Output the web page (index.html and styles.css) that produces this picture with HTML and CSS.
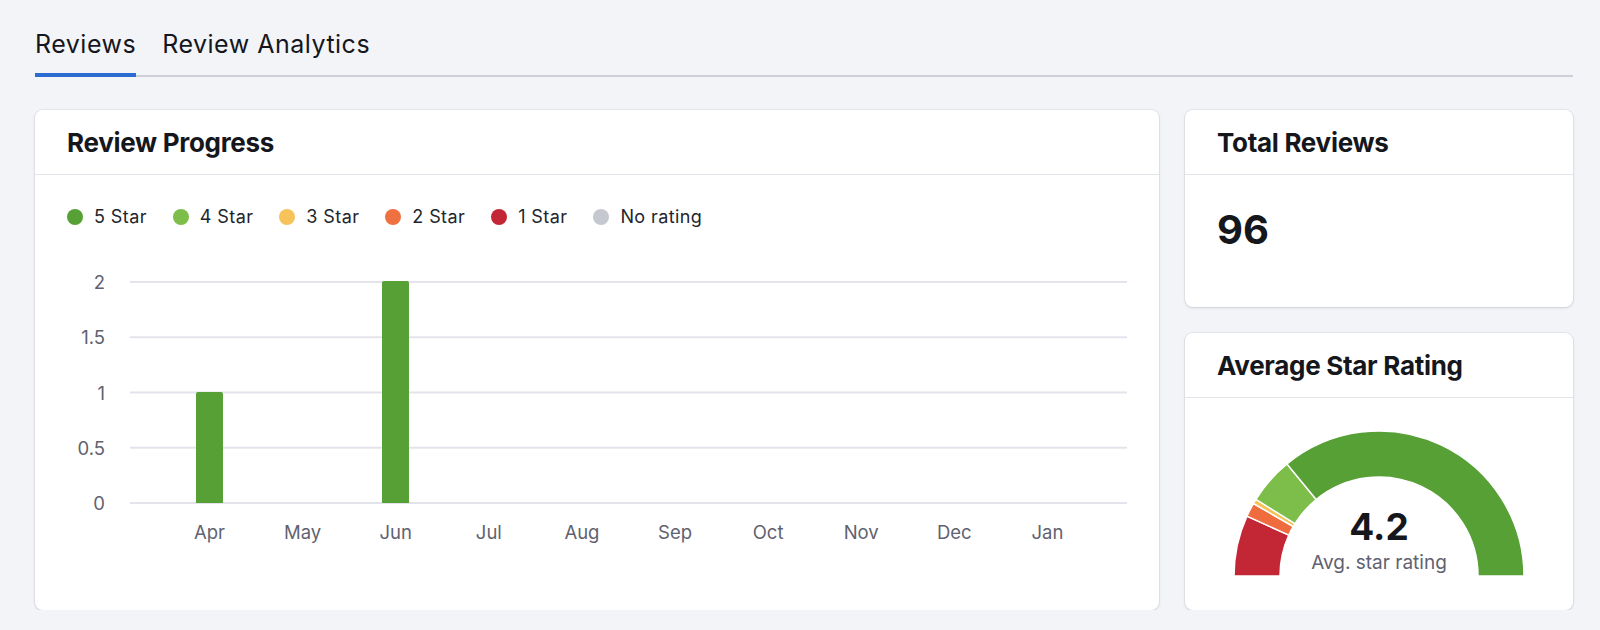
FILE: index.html
```html
<!DOCTYPE html>
<html>
<head>
  <title>Reviews</title>
  <link rel="stylesheet" href="styles.css">
</head>
<body>
  <div class="page">
    <div class="tabs">
      <div class="tab active">Reviews</div>
      <div class="tab">Review Analytics</div>
    </div>

    <div class="dashboard">
      <div class="card progress-card">
        <div class="card-header"><h2>Review Progress</h2></div>
        <div class="progress-body">
          <div class="legend">
            <div class="legend-item"><span class="dot star-5"></span>5 Star</div>
            <div class="legend-item"><span class="dot star-4"></span>4 Star</div>
            <div class="legend-item"><span class="dot star-3"></span>3 Star</div>
            <div class="legend-item"><span class="dot star-2"></span>2 Star</div>
            <div class="legend-item"><span class="dot star-1"></span>1 Star</div>
            <div class="legend-item"><span class="dot no-rating"></span>No rating</div>
          </div>

          <div class="chart">
            <div class="y-axis">
              <span>2</span>
              <span>1.5</span>
              <span>1</span>
              <span>0.5</span>
              <span>0</span>
            </div>
            <div class="plot-wrap">
              <div class="plot">
                <div class="col"><div class="bar" style="height: 111px"></div></div>
                <div class="col"></div>
                <div class="col"><div class="bar" style="height: 222px"></div></div>
                <div class="col"></div>
                <div class="col"></div>
                <div class="col"></div>
                <div class="col"></div>
                <div class="col"></div>
                <div class="col"></div>
                <div class="col"></div>
              </div>
              <div class="x-axis">
                <span>Apr</span>
                <span>May</span>
                <span>Jun</span>
                <span>Jul</span>
                <span>Aug</span>
                <span>Sep</span>
                <span>Oct</span>
                <span>Nov</span>
                <span>Dec</span>
                <span>Jan</span>
              </div>
            </div>
          </div>
        </div>
      </div>

      <div class="card total-card">
        <div class="card-header"><h2>Total Reviews</h2></div>
        <div class="total-body">96</div>
      </div>

      <div class="card rating-card">
        <div class="card-header"><h2>Average Star Rating</h2></div>
        <div class="rating-body">
          <svg class="gauge" width="294" height="148" viewBox="0 0 294 148">
            <!-- 1 star -->
            <path fill="#c32634" d="M2 147 A145 145 0 0 1 14.95 87.1 L56.84 106.1 A99 99 0 0 0 48 147 Z"/>
            <!-- 2 star -->
            <path fill="#ef6c3e" d="M14.95 87.1 A145 145 0 0 1 21.43 74.5 L61.27 97.5 A99 99 0 0 0 56.84 106.1 Z"/>
            <!-- 3 star -->
            <path fill="#f7c052" d="M21.43 74.5 A145 145 0 0 1 23.9 70.38 L62.95 94.69 A99 99 0 0 0 61.27 97.5 Z"/>
            <!-- 4 star -->
            <path fill="#7dbd4a" d="M23.9 70.38 A145 145 0 0 1 54.97 34.96 L84.16 70.5 A99 99 0 0 0 62.95 94.69 Z"/>
            <!-- 5 star -->
            <path fill="#56a036" d="M54.97 34.96 A145 145 0 0 1 292 147 L246 147 A99 99 0 0 0 84.16 70.5 Z"/>
            <text class="gauge-value" x="147" y="111">4.2</text>
            <text class="gauge-label" x="147" y="140">Avg. star rating</text>
          </svg>
        </div>
      </div>
    </div>
  </div>
</body>
</html>
```

FILE: styles.css
```css
body {
  margin: 0;
  padding: 0;
  background-color: #f3f4f8;
  font-family: Inter, "Noto Sans", sans-serif;
  color: #15171c;
}

.page {
  padding: 29px 27px 0 35px;
}

.tabs {
  display: flex;
  gap: 26px;
  border-bottom: 2px solid #cdd0d9;
}

.tab {
  font-size: 25px;
  line-height: 30px;
  letter-spacing: 0.5px;
  padding-bottom: 14px;
  border-bottom: 4px solid transparent;
  margin-bottom: -2px;
}

.tab.active {
  border-bottom-color: #2b6cd0;
}

.dashboard {
  margin-top: 33px;
  display: grid;
  grid-template-columns: 1fr 388px;
  grid-template-rows: 197px 277px;
  gap: 26px;
}

.card {
  background-color: #fff;
  border-radius: 8px;
  box-shadow: 0 0 0 1px rgba(20, 24, 40, 0.05), 0 1px 3px rgba(20, 24, 40, 0.12);
  overflow: hidden;
}

.progress-card {
  grid-row: 1 / 3;
}

.card-header {
  height: 64px;
  padding: 0 32px;
  display: flex;
  align-items: center;
  border-bottom: 1px solid #e3e4ea;
}

.card-header h2 {
  margin: 0;
  font-size: 26px;
  font-weight: 700;
  letter-spacing: -0.3px;
}

/* review progress */
.progress-body {
  padding: 31px 32px 0 32px;
}

.legend {
  display: flex;
  gap: 26px;
  font-size: 18px;
  line-height: 22px;
  letter-spacing: 0.4px;
  color: #22252c;
}

.legend-item {
  display: flex;
  align-items: center;
  gap: 11px;
}

.dot {
  width: 16px;
  height: 16px;
  border-radius: 50%;
}

.star-5 { background-color: #56a036; }
.star-4 { background-color: #7dbd4a; }
.star-3 { background-color: #f5c35a; }
.star-2 { background-color: #ef7040; }
.star-1 { background-color: #c32634; }
.no-rating { background-color: #c5c8cf; }

.chart {
  display: flex;
  gap: 25px;
  margin-top: 53px;
}

.y-axis {
  width: 38px;
  height: 223px;
  display: flex;
  flex-direction: column;
  justify-content: space-between;
  align-items: flex-end;
  font-size: 18.5px;
  color: #5f6270;
}

.y-axis span {
  height: 2px;
  line-height: 2px;
}

.plot-wrap {
  flex: 1;
}

.plot {
  height: 222px;
  padding: 0 33px;
  display: flex;
  align-items: flex-end;
  background-image: linear-gradient(#e3e4eb 2px, transparent 2px);
  background-size: 100% 55.25px;
  border-bottom: 1px solid #e3e4eb;
}

.col {
  flex: 1;
  display: flex;
  justify-content: center;
}

.bar {
  width: 27px;
  background-color: #56a036;
  border-radius: 2px 2px 0 0;
}

.x-axis {
  display: flex;
  padding: 0 33px;
  margin-top: 18px;
  font-size: 18.5px;
  line-height: 20px;
  color: #5f6270;
}

.x-axis span {
  flex: 1;
  text-align: center;
}

/* total reviews */
.total-body {
  padding: 31px 32px 0 32px;
  font-size: 40px;
  line-height: 48px;
  font-weight: 700;
}

/* average rating */
.rating-body {
  display: flex;
  justify-content: center;
  padding-top: 31px;
}

.gauge path {
  stroke: #fff;
  stroke-width: 1.5;
}

.gauge-value {
  font-family: Inter, sans-serif;
  font-size: 37px;
  font-weight: 700;
  fill: #15171c;
  text-anchor: middle;
}

.gauge-label {
  font-family: Inter, sans-serif;
  font-size: 19px;
  fill: #5f6270;
  text-anchor: middle;
}
```
